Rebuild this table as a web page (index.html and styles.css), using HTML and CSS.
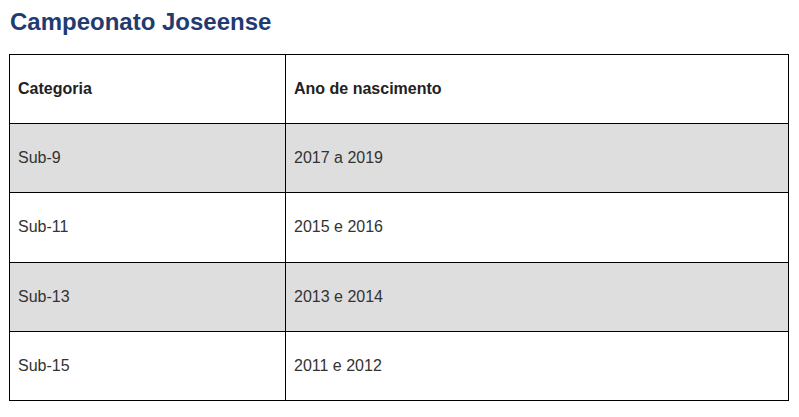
FILE: index.html
```html
<!DOCTYPE html>
<html lang="pt-BR">
<head>
<meta charset="utf-8">
<title>Campeonato Joseense</title>
<link rel="stylesheet" href="styles.css">
</head>
<body>
<h2 class="title">Campeonato Joseense</h2>
<table class="tbl">
  <thead>
    <tr><th class="c1">Categoria</th><th>Ano de nascimento</th></tr>
  </thead>
  <tbody>
    <tr class="alt"><td>Sub-9</td><td>2017 a 2019</td></tr>
    <tr><td>Sub-11</td><td>2015 e 2016</td></tr>
    <tr class="alt"><td>Sub-13</td><td>2013 e 2014</td></tr>
    <tr><td>Sub-15</td><td>2011 e 2012</td></tr>
  </tbody>
</table>
</body>
</html>
```
FILE: styles.css
```css
html, body { margin: 0; padding: 0; background: #fff; }
body {
  font-family: "Liberation Sans", Arial, sans-serif;
  padding: 8px 10px 0 9px;
}
.title {
  margin: 0 0 0 1px;
  font-size: 24px;
  line-height: 28px;
  font-weight: bold;
  color: #1f3b6f;
}
.tbl {
  margin-top: 18px;
  width: 780px;
  border-collapse: collapse;
  font-size: 16px;
}
.tbl th, .tbl td {
  border: 1px solid #000;
  padding: 0 8px;
  height: 68.2px;
  text-align: left;
  vertical-align: middle;
}
.tbl th {
  font-weight: bold;
  color: #222;
}
.tbl td { color: #333; }
.tbl .c1 { width: 259px; }
.tbl tr.alt td { background: #dedede; }
```
